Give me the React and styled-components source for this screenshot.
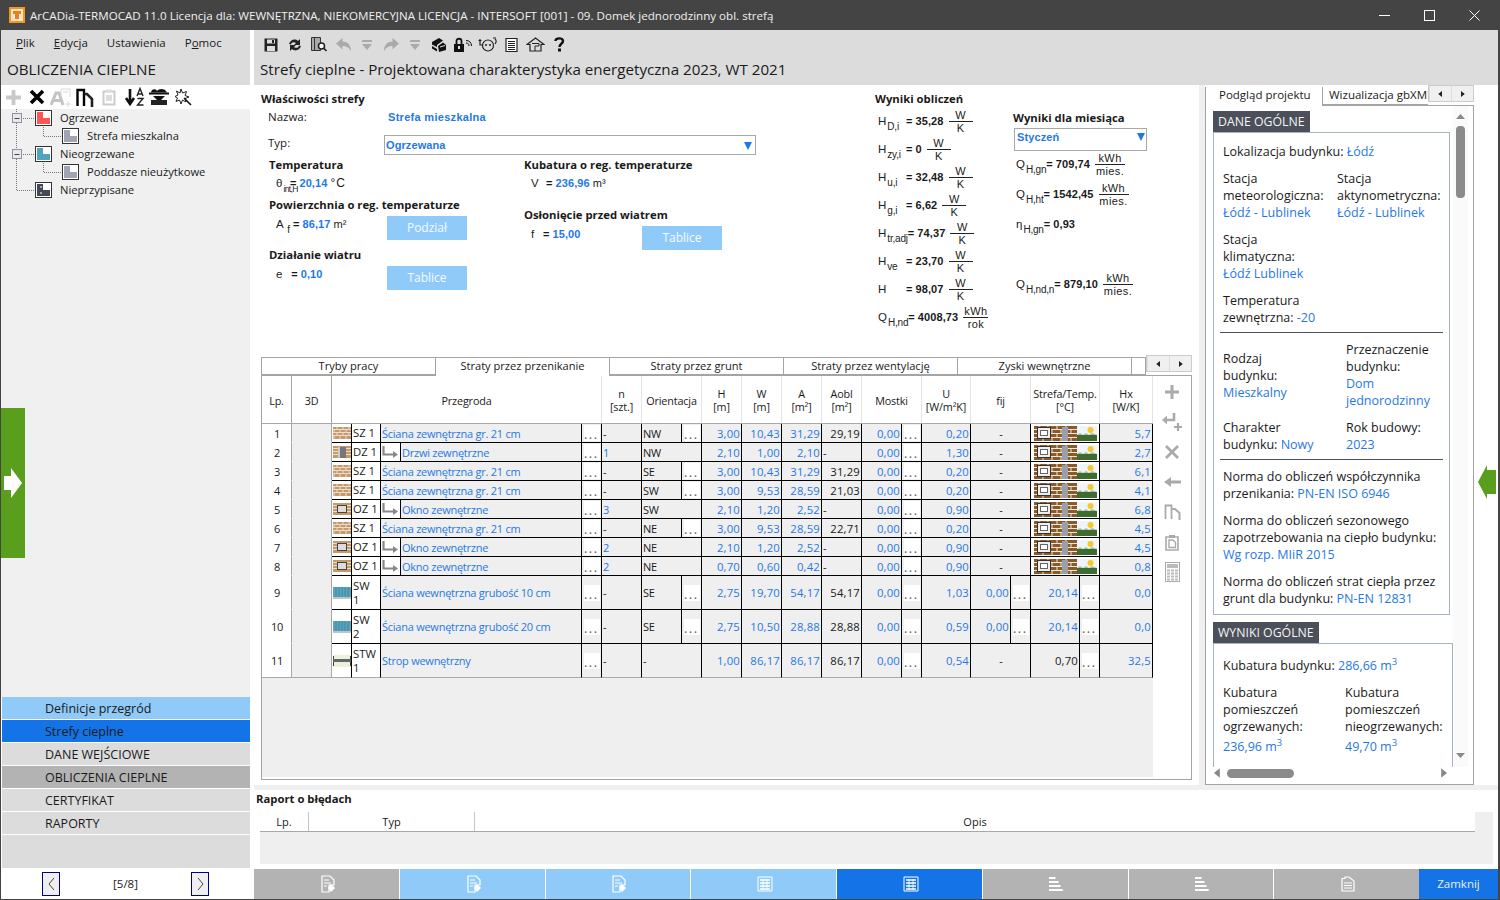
import React from "react";
import styled, { createGlobalStyle } from "styled-components";

const ui = '"Open Sans", "Noto Sans", sans-serif';
const arial = '"Liberation Sans", Arial, sans-serif';
const blue = "#1f78e6";

const GlobalStyle = createGlobalStyle`
  html, body { margin: 0; padding: 0; background: #fff; }
  * { box-sizing: border-box; }
  svg { flex: none; }
`;

const Window = styled.div`
  position: relative;
  width: 1500px;
  height: 900px;
  display: flex;
  flex-direction: column;
  overflow: hidden;
  border-left: 1px solid #444;
  border-right: 2px solid #444;
  border-bottom: 1px solid #444;
  font-family: ${ui};
  font-size: 11.5px;
  color: #1a1a1a;
  background: #fff;
`;

const TitleBar = styled.div`
  height: 30px;
  margin-left: -1px;
  margin-right: -2px;
  flex: none;
  background: #444;
  color: #f0f0f0;
  display: flex;
  align-items: center;
  padding: 0 3px 0 9px;
  font-size: 11.6px;
`;

const TitleText = styled.span`
  flex: 1;
  margin-left: 5px;
  white-space: nowrap;
`;

const WinButton = styled.span`
  width: 45px;
  height: 30px;
  display: flex;
  align-items: center;
  justify-content: center;
`;

const Body = styled.div`
  flex: 1;
  display: flex;
  min-height: 0;
`;

const Sidebar = styled.aside`
  width: 249px;
  flex: none;
  display: flex;
  flex-direction: column;
`;

const Menu = styled.nav`
  height: 25px;
  background: #dcdcdc;
  display: flex;
  align-items: center;
  gap: 19px;
  padding: 0 0 1px 15px;
`;

const PanelTitle = styled.div`
  height: 30px;
  background: #dcdcdc;
  font-size: 15.2px;
  padding-left: 6px;
  line-height: 29px;
  white-space: nowrap;
`;

const SideTools = styled.div`
  height: 24px;
  display: flex;
  align-items: center;
`;

const Slot = styled.span`
  width: ${(p) => p.$w || 24}px;
  flex: none;
  height: 24px;
  display: flex;
  align-items: center;
  justify-content: center;
`;

const Tree = styled.div`
  flex: 1;
  background: #f0f0f0;
`;

const TreeRow = styled.div`
  height: 18px;
  display: flex;
  align-items: center;
  white-space: nowrap;
`;

const TreeLabel = styled.span`
  margin: -2px 0 0 8px;
  font-size: 11.2px;
`;

const Nav = styled.div`
  display: flex;
  flex-direction: column;
  gap: 1px;
`;

const NavItem = styled.div`
  height: 22px;
  margin-left: 1px;
  padding-left: 43px;
  line-height: 24px;
  font-size: 12.5px;
  background: ${(p) => p.$bg};
`;

const NavFill = styled.div`
  height: 33px;
  margin-left: 1px;
  background: #dcdcdc;
`;

const Pager = styled.div`
  height: 31px;
  display: grid;
  grid-template-columns: 18px 1fr 18px;
  align-items: center;
  padding: 0 41px;
  text-align: center;
`;

const PagerButton = styled.span`
  height: 24px;
  border: 1px solid #000080;
  background: #efefef;
  display: flex;
  align-items: center;
  justify-content: center;
`;

const Main = styled.main`
  margin-left: 4px;
  flex: 1;
  min-width: 0;
  display: flex;
  flex-direction: column;
`;

const MainHeader = styled.header`
  height: 55px;
  flex: none;
  background: #dcdcdc;
`;

const MainTools = styled.div`
  height: 25px;
  padding: 4px 0 0 5px;
  display: flex;
  align-items: center;
`;

const HeaderTitle = styled.div`
  font-size: 15.15px;
  line-height: 29px;
  padding-left: 6px;
  white-space: nowrap;
`;

const Content = styled.div`
  height: 700px;
  flex: none;
  display: flex;
`;

const Center = styled.div`
  width: 945px;
  flex: none;
  display: flex;
  flex-direction: column;
`;

const TopPanel = styled.section`
  height: 265px;
  flex: none;
  padding: 6px 0 0 7px;
  display: grid;
  grid-template-columns: 614px 138px 1fr;
`;

const SectionTitle = styled.div`
  font-weight: 700;
  font-size: 11.3px;
  height: 16px;
  line-height: 16px;
  margin-top: ${(p) => p.$top || 0}px;
  white-space: nowrap;
`;

const NameRow = styled.div`
  display: grid;
  grid-template-columns: 120px 1fr;
  height: 16px;
  line-height: 16px;
  margin-top: 2px;
  padding-left: 7px;
`;

const BlueBold = styled.b`
  color: ${blue};
  font-family: ${arial};
  font-size: 11px;
  letter-spacing: 0.3px;
`;

const TypeRow = styled.div`
  display: grid;
  grid-template-columns: 116px 372px;
  margin-top: 10px;
  padding-left: 7px;
  line-height: 15px;
`;

const Select = styled.div`
  height: 20px;
  border: 1px solid #a8a8a8;
  display: flex;
  align-items: center;
  justify-content: space-between;
  padding: 1px 3px 0 1px;
  color: ${blue};
  font-family: ${arial};
  font-weight: 700;
  font-size: 11px;
  letter-spacing: 0.1px;
  background: #fff;
`;

const Caret = styled.i`
  width: 0;
  height: 0;
  border-left: 4px solid transparent;
  border-right: 4px solid transparent;
  border-top: 8px solid ${blue};
`;

const FormColumns = styled.div`
  display: grid;
  grid-template-columns: 255px 1fr;
  padding-left: 8px;
  margin-top: 2px;
`;

const FieldRow = styled.div`
  display: grid;
  grid-template-columns: 118px 80px;
  margin-top: ${(p) => p.$top || 0}px;
`;

const Formula = styled.div`
  height: ${(p) => p.$h || 16}px;
  margin-top: ${(p) => p.$top || 0}px;
  padding-left: ${(p) => p.$left ?? 7}px;
  display: flex;
  align-items: center;
  font-family: ${arial};
  font-size: 11px;
  white-space: nowrap;
  letter-spacing: 0.1px;
`;

const Sym = styled.span`
  display: inline-block;
  min-width: ${(p) => p.$w || 0}px;
  color: #222;
  font-size: 11.5px;
  letter-spacing: 0;
  sub {
    font-size: ${(p) => (p.$tight ? 8.5 : 10)}px;
    line-height: 0;
    vertical-align: -5px;
    margin-left: 1px;
    margin-right: ${(p) => (p.$tight ? -8 : 0)}px;
    letter-spacing: ${(p) => (p.$tight ? -0.6 : -0.2)}px;
  }
`;

const Val = styled.b`
  margin: 0 3px;
  color: ${(p) => (p.$blue ? blue : "#1a1a1a")};
`;

const Eq = styled.b`
  color: #1a1a1a;
`;

const Degree = styled.span`
  font-size: 12px;
  letter-spacing: 1px;
`;

const Fraction = styled.span`
  display: inline-flex;
  flex-direction: column;
  align-items: center;
  min-width: ${(p) => p.$w || 24}px;
  margin-left: 2px;
  line-height: 12px;
  font-size: 11px;
  letter-spacing: 0.4px;
  span:first-child {
    align-self: stretch;
    text-align: center;
    border-bottom: 1px solid #222;
    padding: 0 1px;
  }
`;

const ActionButton = styled.div`
  height: 24px;
  width: 80px;
  background: #90caf9;
  color: #f5fbff;
  text-align: center;
  line-height: 24px;
  font-size: 12px;
`;

const MonthColumn = styled.div`
  padding-top: 19px;
`;

const MonthSelect = styled(Select)`
  margin: 2px 0 0 1px;
  height: 23px;
  width: 133px;
  padding: 0 1px 5px 2px;
`;

const MonthRows = styled.div`
  display: flex;
  flex-direction: column;
  gap: 4px;
`;

const TablePanel = styled.section`
  flex: 1;
  padding: 7px 7px 5px;
  display: flex;
  flex-direction: column;
  min-height: 0;
`;

const TabsRow = styled.div`
  height: 18px;
  flex: none;
  display: flex;
  position: relative;
  z-index: 1;
`;

const Tab = styled.div`
  width: ${(p) => p.$w || 174}px;
  flex: none;
  height: ${(p) => (p.$active ? 19 : 18)}px;
  border: 1px solid #a4a4a4;
  border-left-width: ${(p) => (p.$first ? 1 : 0)}px;
  border-bottom-width: ${(p) => (p.$active ? 0 : 1)}px;
  background: #fff;
  text-align: center;
  line-height: 15px;
  font-size: 11.1px;
  white-space: nowrap;
  overflow: hidden;
`;

const ScrollPair = styled.div`
  margin: -2px 0 0 auto;
  width: 46px;
  height: 17px;
  flex: none;
  display: grid;
  grid-template-columns: 1fr 1fr;
  background: #f0f0f0;
  border: 1px solid #ccc;
  span {
    display: flex;
    align-items: center;
    justify-content: center;
    border-left: 1px solid #ddd;
  }
`;

const Frame = styled.div`
  height: 405px;
  flex: none;
  border: 1px solid #a4a4a4;
  display: flex;
`;

const TableArea = styled.div`
  width: 891px;
  flex: none;
  height: 401px;
  background: #efefef;
`;

const columns =
  "30px 40px 20px 29px 20px 181px 20px 40px 40px 20px 40px 40px 40px 40px 40px 20px 49px 40px 20px 49px 20px 53px";

const HeadRow = styled.div`
  height: 48px;
  display: grid;
  grid-template-columns: ${columns};
  background: #fff;
  border-bottom: 1px solid #a8a8a8;
`;

const HeadCell = styled.div`
  grid-column: ${(p) => p.$col};
  display: flex;
  align-items: center;
  justify-content: center;
  text-align: center;
  padding-top: 1px;
  line-height: 13px;
  font-size: 10.8px;
  letter-spacing: -0.15px;
  border-right: 1px solid ${(p) => (p.$strong ? "#a8a8a8" : "#e4e4e4")};
  white-space: pre-line;
`;

const Row = styled.div`
  height: ${(p) => (p.$tall ? 34 : 19)}px;
  display: grid;
  grid-template-columns: ${columns};
`;

const lineColor = (p) => {
  if (p.$last) return "#a8a8a8";
  return p.$soft ? "transparent" : "#000";
};

const Cell = styled.div`
  grid-column: ${(p) => p.$col};
  background: ${(p) => (p.$white ? "#fff" : "#efefef")};
  color: ${(p) => (p.$blue ? blue : "#1a1a1a")};
  border-right: 1px solid ${(p) => (p.$soft ? "#a8a8a8" : "#000")};
  border-bottom: 1px solid ${lineColor};
  display: flex;
  align-items: center;
  justify-content: ${(p) => p.$align || "flex-start"};
  padding: ${(p) => (p.$align === "flex-end" ? "0 1px 0 0" : p.$flush ? "0" : "0 0 0 1px")};
  white-space: nowrap;
  overflow: hidden;
  font-size: ${(p) => (p.$num ? 11.3 : 11)}px;
  letter-spacing: ${(p) => (p.$num ? "0.2px" : "-0.25px")};
`;

const Code = styled.span`
  width: ${(p) => (p.$tall ? "min-content" : "auto")};
  margin-left: 1px;
  white-space: ${(p) => (p.$tall ? "normal" : "nowrap")};
  line-height: 14px;
  font-size: 11.3px;
  letter-spacing: 0;
`;

const DotsBox = styled.span`
  width: 16px;
  height: 16px;
  margin: auto;
  background: #fff;
  color: #666;
  font-size: 10px;
  font-weight: 700;
  letter-spacing: 2px;
  line-height: 20px;
  text-align: center;
  overflow: hidden;
`;

const ToolColumn = styled.div`
  flex: 1;
  display: flex;
  flex-direction: column;
  align-items: center;
  gap: 6px;
  padding-top: 4px;
`;

const RightWrap = styled.div`
  flex: 1;
  min-width: 0;
  border-left: 6px solid #f0f0f0;
  padding-top: 2px;
`;

const RightFrame = styled.div`
  width: 269px;
`;

const RightTabs = styled.div`
  height: 18px;
  display: flex;
  position: relative;
  z-index: 1;
`;

const RightTab = styled.div`
  height: ${(p) => (p.$active ? 19 : 18)}px;
  width: ${(p) => p.$w}px;
  flex: none;
  background: #fff;
  border-left: 1px solid #a4a4a4;
  border-bottom: ${(p) => (p.$active ? "none" : "1px solid #a4a4a4")};
  line-height: 15px;
  padding-left: ${(p) => p.$pad}px;
  white-space: nowrap;
  overflow: hidden;
`;

const PreviewBox = styled.div`
  position: relative;
  height: 680px;
  border: 1px solid #a4a4a4;
  overflow: hidden;
  padding: 5px 0 0 7px;
  font-size: 12.5px;
  line-height: 17px;
`;

const DarkLabel = styled.div`
  display: inline-block;
  height: 21px;
  padding: 0 5px;
  background: #4b505a;
  color: #f5f5f5;
  line-height: 21px;
  font-size: 12.3px;
  vertical-align: top;
`;

const LabelBox = styled.div`
  width: ${(p) => p.$w}px;
  min-height: ${(p) => p.$min || 0}px;
  border: 1px solid #a5b3c4;
  padding: ${(p) => p.$pt || 10}px 3px 7px 9px;
  margin-bottom: ${(p) => p.$mb || 0}px;
  white-space: nowrap;
`;

const Para = styled.div`
  margin-bottom: ${(p) => p.$mb ?? 10}px;
`;

const Link = styled.span`
  color: ${blue};
  sup {
    font-size: 9.5px;
    line-height: 0;
  }
`;

const VolumeValue = styled(Link)`
  display: block;
  margin-top: 3px;
`;

const TwoCols = styled.div`
  display: grid;
  grid-template-columns: ${(p) => p.$first}px 1fr;
  align-items: ${(p) => p.$align || "start"};
  margin-bottom: ${(p) => p.$mb ?? 10}px;
`;

const Rule = styled.div`
  height: 1px;
  background: #4b505a;
  margin: 6px 3px 8px -3px;
  width: 223px;
`;

const VScroll = styled.div`
  position: absolute;
  top: 0;
  right: 5px;
  width: 15px;
  bottom: 17px;
  padding: 8px 0;
  background: #fafafa;
  display: flex;
  flex-direction: column;
  align-items: center;
`;

const VThumb = styled.div`
  width: 9px;
  height: 72px;
  margin: 6px 0 auto;
  border-radius: 4px;
  background: #8b8b8b;
`;

const HScroll = styled.div`
  position: absolute;
  left: 0;
  right: 0;
  bottom: 0;
  height: 17px;
  background: #fff;
  display: flex;
  align-items: center;
  padding: 0 26px 5px 8px;
  justify-content: space-between;
`;

const HThumb = styled.div`
  width: 67px;
  height: 9px;
  border-radius: 5px;
  background: #8b8b8b;
  margin: 0 auto 0 6px;
`;

const Strip = styled.div`
  height: 5px;
  flex: none;
  background: #f0f0f0;
`;

const Report = styled.section`
  height: 78px;
  flex: none;
  padding: 1px 5px 5px 2px;
`;

const ReportGrid = styled.div`
  margin: 5px 0 0 4px;
  height: 52px;
  background: #efefef;
`;

const ReportHead = styled.div`
  width: 1215px;
  height: 20px;
  display: grid;
  grid-template-columns: 49px 166px 1fr;
  background: #fff;
  border-bottom: 1px solid #a8a8a8;
  text-align: center;
  line-height: 19px;
  font-size: 11px;
`;

const ReportHeadCell = styled.div`
  border-right: ${(p) => (p.$border ? "1px solid #c4c4c4" : "none")};
`;

const BottomBar = styled.footer`
  height: 30px;
  margin-top: 1px;
  flex: none;
  display: flex;
  gap: 1px;
`;

const BottomButton = styled.div`
  flex: 1;
  background: ${(p) => p.$bg};
  display: flex;
  align-items: center;
  justify-content: center;
  padding-left: 3px;
`;

const CloseButton = styled.div`
  width: 79px;
  flex: none;
  margin-left: -1px;
  background: #1473e6;
  color: #e6f0ff;
  text-align: center;
  line-height: 30px;
  font-size: 11.5px;
`;

const EdgeArrow = styled.div`
  position: absolute;
  display: flex;
  align-items: center;
  justify-content: center;
  top: ${(p) => p.$top}px;
  height: ${(p) => p.$h}px;
  left: ${(p) => p.$left}px;
  width: ${(p) => p.$w}px;
  background: ${(p) => p.$bg};
`;

const TreeGuide = ({ kind }) => {
  const dots = { stroke: "#777", strokeDasharray: "1 1", fill: "none" };
  return (
    <svg width="34" height="18">
      {kind !== "last" && <path d="M15.5 0V18" {...dots} />}
      {kind === "last" && <path d="M15.5 0V9.5H33" {...dots} />}
      {kind === "open" && (
        <g>
          <path d="M22 9.5H33" {...dots} />
          <rect x="11.5" y="4.5" width="9" height="9" fill="#e8e8e8" stroke="#8a94a6" />
          <path d="M13.5 9.5H18.5" stroke="#445" />
        </g>
      )}
    </svg>
  );
};

const ChildGuide = () => (
  <svg width="27" height="18">
    <path d="M8.5 0V9.5H26" stroke="#777" strokeDasharray="1 1" fill="none" />
  </svg>
);

const ZoneIcon = ({ fill, mark }) => (
  <svg width="17" height="16">
    <rect x="0.5" y="0.5" width="16" height="15" fill="#fff" stroke="#333" />
    <path d="M2 2H8V8H15V14H2Z" fill={fill} />
    {mark && <path d="M5 5H7M5 11H7" stroke="#fff" />}
  </svg>
);

const Brick = () => (
  <svg width="18" height="12" viewBox="0 0 18 12">
    <rect width="18" height="12" fill="#c49a6c" />
    <path d="M0 2.5H18M0 5.5H18M0 8.5H18" stroke="#ecdcc8" />
    <path d="M4 0V2M10 0V2M16 0V2M1 3V5M7 3V5M13 3V5M4 6V8M10 6V8M16 6V8M1 9V12M7 9V12M13 9V12" stroke="#ecdcc8" />
  </svg>
);

const DoorIcon = () => (
  <svg width="18" height="12" viewBox="0 0 18 12">
    <rect width="18" height="12" fill="#c49a6c" />
    <path d="M0 2.5H18M0 5.5H18M0 8.5H18" stroke="#ecdcc8" />
    <rect x="7" y="1" width="6" height="11" fill="#777" />
    <rect x="5" y="1" width="2" height="11" fill="#ccc" />
  </svg>
);

const WindowIcon = () => (
  <svg width="18" height="12" viewBox="0 0 18 12">
    <rect width="18" height="12" fill="#c49a6c" />
    <path d="M0 2.5H18M0 5.5H18M0 8.5H18" stroke="#ecdcc8" />
    <rect x="4.5" y="2.5" width="9" height="7" fill="#ddd" stroke="#444" />
  </svg>
);

const InnerWall = () => (
  <svg width="18" height="12" viewBox="0 0 18 12">
    <rect width="18" height="10" fill="#5aa5bd" />
    <path d="M3 0V10M6 0V10M9 0V10M12 0V10M15 0V10" stroke="#3f8aa3" />
    <rect y="10" width="18" height="2" fill="#c4c4c4" />
  </svg>
);

const SlabIcon = () => (
  <svg width="18" height="12" viewBox="0 0 18 12">
    <rect width="18" height="12" fill="#e8f2dc" />
    <path d="M0.5 1V11M17.5 1V11" stroke="#444" />
    <rect y="4" width="18" height="3" fill="#666" />
  </svg>
);

const icons = { sz: Brick, dz: DoorIcon, oz: WindowIcon, sw: InnerWall, stw: SlabIcon };

const ZoneStrip = () => (
  <svg width="63" height="15" viewBox="0 0 63 15">
    <rect width="43" height="15" fill="#8b5a2b" />
    <path d="M0 3.5H43M0 7.5H43M0 11.5H43" stroke="#f2e6d5" />
    <path d="M5 0V3M14 0V3M23 0V3M32 0V3M9 4V7M18 4V7M27 4V7M37 4V7M5 8V11M14 8V11M23 8V11M32 8V11M9 12V15M18 12V15M27 12V15M37 12V15" stroke="#f2e6d5" />
    <rect x="3.5" y="1.5" width="13" height="11" fill="#eee" stroke="#333" />
    <rect x="6.5" y="4.5" width="7" height="5" fill="#fff" stroke="#666" />
    <rect x="28" y="1" width="6" height="14" fill="#9aa0aa" />
    <rect x="43" width="20" height="15" fill="#eef4f8" />
    <circle cx="56.5" cy="4" r="3" fill="#f5c92a" />
    <rect x="43" y="9" width="20" height="6" fill="#3d6b30" />
    <path d="M43 9L46 7L49 9L52 7L55 9L58 7L63 9" fill="#a8bca0" />
  </svg>
);

const Dots = () => <DotsBox>...</DotsBox>;

const Arrow = () => (
  <svg width="18" height="13" viewBox="0 0 18 13">
    <path d="M1.5 0V8.5H12" fill="none" stroke="#888" strokeWidth="2.2" />
    <path d="M11 5L16 8.5L11 12Z" fill="#888" />
  </svg>
);

const rows = [
  { lp: 1, icon: "sz", code: "SZ 1", name: "Ściana zewnętrzna gr. 21 cm", n: "-", or: "NW", h: "3,00", w: "10,43", a: "31,29", ao: "29,19", u: "0,20", hx: "5,7" },
  { lp: 2, icon: "dz", code: "DZ 1", child: true, name: "Drzwi zewnętrzne", n: "1", or: "NW", h: "2,10", w: "1,00", a: "2,10", ao: "-", u: "1,30", hx: "2,7" },
  { lp: 3, icon: "sz", code: "SZ 1", name: "Ściana zewnętrzna gr. 21 cm", n: "-", or: "SE", h: "3,00", w: "10,43", a: "31,29", ao: "31,29", u: "0,20", hx: "6,1" },
  { lp: 4, icon: "sz", code: "SZ 1", name: "Ściana zewnętrzna gr. 21 cm", n: "-", or: "SW", h: "3,00", w: "9,53", a: "28,59", ao: "21,03", u: "0,20", hx: "4,1" },
  { lp: 5, icon: "oz", code: "OZ 1", child: true, name: "Okno zewnętrzne", n: "3", or: "SW", h: "2,10", w: "1,20", a: "2,52", ao: "-", u: "0,90", hx: "6,8" },
  { lp: 6, icon: "sz", code: "SZ 1", name: "Ściana zewnętrzna gr. 21 cm", n: "-", or: "NE", h: "3,00", w: "9,53", a: "28,59", ao: "22,71", u: "0,20", hx: "4,5" },
  { lp: 7, icon: "oz", code: "OZ 1", child: true, name: "Okno zewnętrzne", n: "2", or: "NE", h: "2,10", w: "1,20", a: "2,52", ao: "-", u: "0,90", hx: "4,5" },
  { lp: 8, icon: "oz", code: "OZ 1", child: true, name: "Okno zewnętrzne", n: "2", or: "NE", h: "0,70", w: "0,60", a: "0,42", ao: "-", u: "0,90", hx: "0,8" },
  { lp: 9, tall: true, icon: "sw", code: "SW 1", name: "Ściana wewnętrzna grubość 10 cm", n: "-", or: "SE", h: "2,75", w: "19,70", a: "54,17", ao: "54,17", u: "1,03", fij: "0,00", st: "20,14", hx: "0,0" },
  { lp: 10, tall: true, icon: "sw", code: "SW 2", name: "Ściana wewnętrzna grubość 20 cm", n: "-", or: "SE", h: "2,75", w: "10,50", a: "28,88", ao: "28,88", u: "0,59", fij: "0,00", st: "20,14", hx: "0,0" },
  { lp: 11, tall: true, last: true, icon: "stw", code: "STW 1", name: "Strop wewnętrzny", n: "-", or: "-", noOrDots: true, h: "1,00", w: "86,17", a: "86,17", ao: "86,17", u: "0,54", st: "0,70", stBlack: true, hx: "32,5" },
];

const TableRow = ({ r }) => {
  const Icon = icons[r.icon];
  const hideOrDots = r.child || r.noOrDots;
  const last = r.last;
  return (
    <Row $tall={r.tall}>
      <Cell $col="1" $white $soft $last={last} $align="center">{r.lp}</Cell>
      <Cell $col="2" $soft $last={last} />
      <Cell $col="3" $white $last={last} $align="center" $flush><Icon /></Cell>
      <Cell $col="4" $white $last={last} $flush><Code $tall={r.tall}>{r.code}</Code></Cell>
      {r.child ? (
        <>
          <Cell $col="5" $white $last={last} $align="center" $flush><Arrow /></Cell>
          <Cell $col="6" $blue $last={last}>{r.name}</Cell>
        </>
      ) : (
        <Cell $col="5 / span 2" $blue $last={last}>{r.name}</Cell>
      )}
      <Cell $col="7" $last={last} $flush><Dots /></Cell>
      <Cell $col="8" $blue={r.n !== "-"} $last={last}>{r.n}</Cell>
      {hideOrDots ? (
        <Cell $col="9 / span 2" $last={last}>{r.or}</Cell>
      ) : (
        <>
          <Cell $col="9" $last={last}>{r.or}</Cell>
          <Cell $col="10" $last={last} $flush><Dots /></Cell>
        </>
      )}
      <Cell $col="11" $blue $num $last={last} $align="flex-end">{r.h}</Cell>
      <Cell $col="12" $blue $num $last={last} $align="flex-end">{r.w}</Cell>
      <Cell $col="13" $blue $num $last={last} $align="flex-end">{r.a}</Cell>
      <Cell $col="14" $num $last={last} $align={r.ao === "-" ? undefined : "flex-end"}>{r.ao}</Cell>
      <Cell $col="15" $blue $num $last={last} $align="flex-end">0,00</Cell>
      <Cell $col="16" $last={last} $flush><Dots /></Cell>
      <Cell $col="17" $blue $num $last={last} $align="flex-end">{r.u}</Cell>
      {r.fij ? (
        <>
          <Cell $col="18" $blue $num $last={last} $align="flex-end">{r.fij}</Cell>
          <Cell $col="19" $last={last} $flush><Dots /></Cell>
        </>
      ) : (
        <Cell $col="18 / span 2" $last={last} $align="center">-</Cell>
      )}
      {r.st ? (
        <>
          <Cell $col="20" $blue={!r.stBlack} $num $last={last} $align="flex-end">{r.st}</Cell>
          <Cell $col="21" $last={last} $flush><Dots /></Cell>
        </>
      ) : (
        <Cell $col="20 / span 2" $white $last={last} $align="center" $flush><ZoneStrip /></Cell>
      )}
      <Cell $col="22" $blue $num $last={last} $align="flex-end">{r.hx}</Cell>
    </Row>
  );
};

const Ic = ({ w = 16, h = 16, children }) => (
  <svg width={w} height={h} viewBox={`0 0 ${w} ${h}`}>{children}</svg>
);

const SideToolbar = () => (
  <SideTools>
    <Slot>
      <Ic w={17} h={17}><path d="M8.5 1V16M1 8.5H16" stroke="#c8c8c8" strokeWidth="3.8" /></Ic>
    </Slot>
    <Slot>
      <Ic w={16} h={16}><path d="M2 2L14 14M14 2L2 14" stroke="#000" strokeWidth="3.6" /></Ic>
    </Slot>
    <Slot>
      <Ic w={22} h={20}>
        <path d="M1 18L6 6H9L13 18M3.5 13.5H11" fill="none" stroke="#c4c4c4" strokeWidth="3" />
        <path d="M11 9V2H20V10M13 5H18M15 17H21M18 14V20" fill="none" stroke="#d8d8d8" />
      </Ic>
    </Slot>
    <Slot>
      <Ic w={18} h={19}>
        <path d="M1.5 18V2H8V18" fill="none" stroke="#000" strokeWidth="2.4" />
        <path d="M8 6H11L16 11V19" fill="none" stroke="#222" strokeWidth="2.6" />
      </Ic>
    </Slot>
    <Slot>
      <Ic w={16} h={18}>
        <path d="M2.5 3.5H13.5V16.5H2.5Z" fill="#fff" stroke="#ccc" strokeWidth="2" />
        <path d="M5 1.5H11V4H5ZM5 7H11V13H5Z" fill="#ddd" />
      </Ic>
    </Slot>
    <Slot $w={27}>
      <Ic w={22} h={20}>
        <path d="M6 2V15M2 11L6 17L10 11" fill="none" stroke="#111" strokeWidth="2.6" />
        <path d="M13 9L16 1.5L19 9M14 7H18M13.5 11.5H19L13.5 18H19.5" fill="none" stroke="#222" strokeWidth="1.4" />
      </Ic>
    </Slot>
    <Slot $w={21}>
      <Ic w={22} h={18}>
        <path d="M1 5.5H21" stroke="#111" strokeWidth="2" />
        <path d="M3 4.5C3 1 8 0 9 3C11 0 17 0 19 4.5ZM5 8H17L13 12H9Z" fill="#111" />
        <path d="M3 12H19V17H3Z" fill="#222" />
      </Ic>
    </Slot>
    <Slot $w={27}>
      <Ic w={18} h={18}>
        <path d="M7 1L8.5 5L12.5 3.5L11 7.5L15 9L11 10.5L12 14L8.5 12L7 16L5.5 12L2 13.5L3.5 10L1 8.5L4 7L2.5 3L6 5Z" fill="#fff" stroke="#222" />
        <path d="M10 10L17 17" stroke="#111" strokeWidth="1.6" />
      </Ic>
    </Slot>
  </SideTools>
);

const ToolIcons = () => (
  <MainTools>
    <Slot>
      <Ic w={14} h={14}>
        <path d="M0.5 0.5H13.5V13.5H0.5Z" fill="#222" />
        <rect x="3" y="1.5" width="8" height="4" fill="#ddd" />
        <rect x="3" y="8" width="8" height="5" fill="#ddd" />
        <rect x="8" y="2" width="2" height="3" fill="#222" />
      </Ic>
    </Slot>
    <Slot>
      <Ic w={14} h={14}>
        <path d="M1 6C2 2 7 0 10 3L12 1V7H6L8 5C6 3.5 3.5 4 3 6.5ZM13 8C12 12 7 14 4 11L2 13V7H8L6 9C8 10.5 10.5 10 11 7.5Z" fill="#222" />
      </Ic>
    </Slot>
    <Slot>
      <Ic w={16} h={15}>
        <path d="M0.5 0.5H9.5V13.5H0.5Z" fill="#aaa" stroke="#333" />
        <path d="M3.5 1V13" stroke="#333" />
        <circle cx="10.5" cy="9" r="3" fill="#fff" stroke="#222" strokeWidth="1.5" />
        <path d="M12.5 11L15.5 14" stroke="#222" strokeWidth="1.6" />
      </Ic>
    </Slot>
    <Slot>
      <Ic w={17} h={14}><path d="M1 5.5L7.5 0V3.5C12 3.5 16 6.5 16 13C14 9.5 11.5 8 7.5 8V11.5Z" fill="#aaa" /></Ic>
    </Slot>
    <Slot>
      <Ic w={10} h={12}><path d="M0 1H10V3H0ZM0 5H10L5 11Z" fill="#aaa" /></Ic>
    </Slot>
    <Slot>
      <Ic w={17} h={14}><path d="M16 5.5L9.5 0V3.5C5 3.5 1 6.5 1 13C3 9.5 5.5 8 9.5 8V11.5Z" fill="#aaa" /></Ic>
    </Slot>
    <Slot>
      <Ic w={10} h={12}><path d="M0 1H10V3H0ZM0 5H10L5 11Z" fill="#aaa" /></Ic>
    </Slot>
    <Slot>
      <Ic w={16} h={15}>
        <path d="M1 5L8 1L12 3.5L6 8V10L1 7.5ZM1 9L6 12V14.5L1 11.5Z" fill="#111" />
        <path d="M7 9L12 5.5L15 8V13L8 15Z" fill="#111" />
        <path d="M9 10L14 8.5" stroke="#ddd" />
      </Ic>
    </Slot>
    <Slot>
      <Ic w={20} h={15}>
        <rect x="1" y="7" width="10" height="8" fill="#111" />
        <path d="M3.5 7V4C3.5 1 8.5 1 8.5 4V7" fill="none" stroke="#111" strokeWidth="1.8" />
        <rect x="5" y="9" width="2" height="3" fill="#ddd" />
        <path d="M13 6C15 6 16 7 16 9M13 3.5C16.5 3.5 18.5 5.5 18.5 9" fill="none" stroke="#111" />
      </Ic>
    </Slot>
    <Slot>
      <Ic w={19} h={15}>
        <circle cx="10" cy="8.5" r="5.5" fill="#ddd" stroke="#222" strokeWidth="1.2" />
        <circle cx="8" cy="8" r="1" fill="#222" />
        <circle cx="12" cy="8" r="1" fill="#222" />
        <path d="M2 2V8H4.5M17 2C18.5 3 18.5 5 17 7" fill="none" stroke="#222" strokeWidth="1.2" />
        <path d="M0.5 3.5H3.5M15 1H18" stroke="#222" />
      </Ic>
    </Slot>
    <Slot>
      <Ic w={13} h={15}>
        <path d="M1 1.5H12V14.5H1Z" fill="#fff" stroke="#222" strokeWidth="1.2" />
        <path d="M3 4.5H10M3 6.5H10M3 8.5H10M3 10.5H10M3 12.5H10" stroke="#222" />
      </Ic>
    </Slot>
    <Slot>
      <Ic w={19} h={15}>
        <path d="M1 7.5L9.5 1L18 7.5H15V14H4V7.5Z" fill="none" stroke="#222" strokeWidth="1.2" />
        <path d="M6 6.5H13V9H9V14" fill="none" stroke="#222" />
      </Ic>
    </Slot>
    <Slot>
      <Ic w={11} h={15}>
        <path d="M1.5 4C1.5 0.5 9 0.5 9 4C9 7 5.5 6.5 5.5 10" fill="none" stroke="#111" strokeWidth="2.4" />
        <rect x="4" y="11.5" width="3" height="3" fill="#111" />
      </Ic>
    </Slot>
  </MainTools>
);

const DocIcon = () => (
  <svg width="14" height="18" viewBox="0 0 14 18">
    <path d="M1 1H9L13 5V10H8V17H1Z" fill="none" stroke="#fff" strokeWidth="1.2" />
    <path d="M3 5H8M3 8H10M3 11H6" stroke="#fff" />
    <path d="M10 9L14 13L10 17L7 13Z" fill="#fff" />
  </svg>
);

const TableIcon = () => (
  <svg width="16" height="16" viewBox="0 0 16 16">
    <path d="M1 1H15V15H1Z" fill="none" stroke="#fff" />
    <path d="M3 4H13M3 7H13M3 10H13M3 13H13" stroke="#fff" strokeWidth="1.4" />
    <path d="M6 3V14M10 3V14" stroke="#fff" strokeWidth="0.8" />
  </svg>
);

const BarsIcon = () => (
  <svg width="15" height="16" viewBox="0 0 15 16">
    <path d="M0 1H6L7 2L6 3H0ZM0 5H9L10 6L9 7H0ZM0 9H11L12 10L11 11H0ZM0 13H13L14.5 14L13 15H0Z" fill="#fff" />
  </svg>
);

const ClipDocIcon = () => (
  <svg width="14" height="16" viewBox="0 0 14 16">
    <path d="M1 2.5H4V1H8L13 5V15H1Z" fill="none" stroke="#fff" strokeWidth="1.2" />
    <path d="M3 7H11M3 9.5H11M3 12H11" stroke="#fff" />
  </svg>
);

const tableTools = (
  <ToolColumn>
    <Slot $w={38}><Ic w={16} h={16}><path d="M8 1V15M1 8H15" stroke="#aaa" strokeWidth="3" /></Ic></Slot>
    <Slot $w={38}>
      <Ic w={22} h={20}>
        <path d="M13 1V8H4" fill="none" stroke="#aaa" strokeWidth="2.6" />
        <path d="M6 3.5L1 8L6 12.5Z" fill="#aaa" />
        <path d="M17 11V19M13 15H21" stroke="#aaa" strokeWidth="2.2" />
      </Ic>
    </Slot>
    <Slot $w={38}><Ic w={14} h={14}><path d="M1 1L13 13M13 1L1 13" stroke="#aaa" strokeWidth="2.8" /></Ic></Slot>
    <Slot $w={38}><Ic w={17} h={12}><path d="M0 6L7 1V4.5H17V7.5H7V11Z" fill="#aaa" /></Ic></Slot>
    <Slot $w={38}>
      <Ic w={17} h={16}>
        <path d="M1.5 15V1.5H7.5V15" fill="none" stroke="#aaa" strokeWidth="1.8" />
        <path d="M8 5H11L15.5 9V16" fill="none" stroke="#aaa" strokeWidth="2" />
      </Ic>
    </Slot>
    <Slot $w={38}>
      <Ic w={14} h={17}>
        <path d="M1 3H13V16H1Z" fill="#fff" stroke="#aaa" strokeWidth="1.6" />
        <path d="M4 1H10V4H4Z" fill="#aaa" />
        <path d="M4 6H8L10.5 8.5V13.5H4Z" fill="none" stroke="#aaa" strokeWidth="1.4" />
      </Ic>
    </Slot>
    <Slot $w={38}>
      <Ic w={15} h={20}>
        <rect x="0.5" y="0.5" width="14" height="19" fill="#fff" stroke="#aaa" />
        <rect x="2" y="2" width="11" height="4" fill="#bbb" />
        <path d="M2 8.5H13M2 11.5H13M2 14.5H13M2 17.5H13" stroke="#bbb" strokeWidth="2" strokeDasharray="3 1" />
      </Ic>
    </Slot>
  </ToolColumn>
);

const Triangle = ({ dir, color = "#222", size = 3 }) => (
  <svg width={size + 2} height={size * 2} viewBox="0 0 6 8">
    <path d={dir === "left" ? "M5 0V8L0 4Z" : "M1 0V8L6 4Z"} fill={color} />
  </svg>
);

export default function App() {
  return (
    <>
      <GlobalStyle />
      <Window>
        <TitleBar>
          <svg width="16" height="16" viewBox="0 0 16 16">
            <rect width="16" height="16" fill="#f7941d" />
            <rect x="2" y="2" width="12" height="12" fill="#fde9cf" />
            <path d="M4 4H12V7H10V12H6V7H4Z" fill="#ef7f1a" />
          </svg>
          <TitleText>ArCADia-TERMOCAD 11.0 Licencja dla: WEWNĘTRZNA, NIEKOMERCYJNA LICENCJA - INTERSOFT [001] - 09. Domek jednorodzinny obl. strefą</TitleText>
          <WinButton>
            <svg width="11" height="11"><path d="M0 5.5H11" stroke="#fff" /></svg>
          </WinButton>
          <WinButton>
            <svg width="11" height="11"><rect x="0.5" y="0.5" width="10" height="10" fill="none" stroke="#fff" /></svg>
          </WinButton>
          <WinButton>
            <svg width="11" height="11"><path d="M0.5 0.5L10.5 10.5M10.5 0.5L0.5 10.5" stroke="#fff" /></svg>
          </WinButton>
        </TitleBar>
        <Body>
          <Sidebar>
            <Menu>
              <span><u>P</u>lik</span>
              <span><u>E</u>dycja</span>
              <span>Ustawienia</span>
              <span>P<u>o</u>moc</span>
            </Menu>
            <PanelTitle>OBLICZENIA CIEPLNE</PanelTitle>
            <SideToolbar />
            <Tree>
              <TreeRow><TreeGuide kind="open" /><ZoneIcon fill="#f55" /><TreeLabel>Ogrzewane</TreeLabel></TreeRow>
              <TreeRow><TreeGuide kind="line" /><ChildGuide /><ZoneIcon fill="#a0a4b4" /><TreeLabel>Strefa mieszkalna</TreeLabel></TreeRow>
              <TreeRow><TreeGuide kind="open" /><ZoneIcon fill="#52a3bb" /><TreeLabel>Nieogrzewane</TreeLabel></TreeRow>
              <TreeRow><TreeGuide kind="line" /><ChildGuide /><ZoneIcon fill="#a0a4b4" /><TreeLabel>Poddasze nieużytkowe</TreeLabel></TreeRow>
              <TreeRow><TreeGuide kind="last" /><ZoneIcon fill="#444a55" mark /><TreeLabel>Nieprzypisane</TreeLabel></TreeRow>
            </Tree>
            <Nav>
              <NavItem $bg="#90caf9">Definicje przegród</NavItem>
              <NavItem $bg="#1473e6">Strefy cieplne</NavItem>
              <NavItem $bg="#dcdcdc">DANE WEJŚCIOWE</NavItem>
              <NavItem $bg="#b3b3b3">OBLICZENIA CIEPLNE</NavItem>
              <NavItem $bg="#dcdcdc">CERTYFIKAT</NavItem>
              <NavItem $bg="#dcdcdc">RAPORTY</NavItem>
              <NavFill />
            </Nav>
            <Pager>
              <PagerButton>
                <svg width="7" height="14"><path d="M6 1L1 7L6 13" fill="none" stroke="#444" /></svg>
              </PagerButton>
              <span>[5/8]</span>
              <PagerButton>
                <svg width="7" height="14"><path d="M1 1L6 7L1 13" fill="none" stroke="#444" /></svg>
              </PagerButton>
            </Pager>
          </Sidebar>
          <Main>
            <MainHeader>
              <ToolIcons />
              <HeaderTitle>Strefy cieplne - Projektowana charakterystyka energetyczna 2023, WT 2021</HeaderTitle>
            </MainHeader>
            <Content>
              <Center>
                <TopPanel>
                  <div>
                    <SectionTitle>Właściwości strefy</SectionTitle>
                    <NameRow>
                      <span>Nazwa:</span>
                      <BlueBold>Strefa mieszkalna</BlueBold>
                    </NameRow>
                    <TypeRow>
                      <span>Typ:</span>
                      <Select>Ogrzewana<Caret /></Select>
                    </TypeRow>
                    <FormColumns>
                      <div>
                        <SectionTitle>Temperatura</SectionTitle>
                        <Formula $top={2}>
                          <Sym $tight>θ<sub>int,H</sub></Sym><Eq>=</Eq><Val $blue>20,14</Val><Degree>°C</Degree>
                        </Formula>
                        <SectionTitle $top={6}>Powierzchnia o reg. temperaturze</SectionTitle>
                        <FieldRow $top={3}>
                          <Formula>
                            <Sym>A<sub>&nbsp;f</sub></Sym><Eq>&nbsp;=</Eq><Val $blue>86,17</Val><span>m²</span>
                          </Formula>
                          <ActionButton>Podział</ActionButton>
                        </FieldRow>
                        <SectionTitle $top={7}>Działanie wiatru</SectionTitle>
                        <FieldRow $top={3}>
                          <Formula>
                            <Sym $w={12}>e</Sym><Eq>&nbsp;=</Eq><Val $blue>0,10</Val>
                          </Formula>
                          <ActionButton>Tablice</ActionButton>
                        </FieldRow>
                      </div>
                      <div>
                        <SectionTitle>Kubatura o reg. temperaturze</SectionTitle>
                        <Formula $top={2}>
                          <Sym $w={15}>V</Sym><Eq>=</Eq><Val $blue>236,96</Val><span>m³</span>
                        </Formula>
                        <SectionTitle $top={16}>Osłonięcie przed wiatrem</SectionTitle>
                        <FieldRow $top={3}>
                          <Formula>
                            <Sym $w={12}>f</Sym><Eq>=</Eq><Val $blue>15,00</Val>
                          </Formula>
                          <ActionButton>Tablice</ActionButton>
                        </FieldRow>
                      </div>
                    </FormColumns>
                  </div>
                  <div>
                    <SectionTitle>Wyniki obliczeń</SectionTitle>
                    {[
                      ["D,i", "35,28"], ["zy,i", "0"], ["u,i", "32,48"], ["g,i", "6,62"],
                      ["tr,adj", "74,37"], ["ve", "23,70"], ["", "98,07"],
                    ].map(([sub, value]) => (
                      <Formula $h={28} $left={3} key={sub}>
                        <Sym $w={28}>H<sub>{sub}</sub></Sym><Eq>=</Eq><Val>{value}</Val>
                        <Fraction><span>W</span><span>K</span></Fraction>
                      </Formula>
                    ))}
                    <Formula $h={28} $left={3}>
                      <Sym>Q<sub>H,nd</sub></Sym><Eq>=</Eq><Val>4008,73</Val>
                      <Fraction><span>kWh</span><span>rok</span></Fraction>
                    </Formula>
                  </div>
                  <MonthColumn>
                    <SectionTitle>Wyniki dla miesiąca</SectionTitle>
                    <MonthSelect>Styczeń<Caret /></MonthSelect>
                    <MonthRows>
                      <Formula $h={26} $left={3}>
                        <Sym>Q<sub>H,gn</sub></Sym><Eq>=</Eq><Val>709,74</Val>
                        <Fraction $w={30}><span>kWh</span><span>mies.</span></Fraction>
                      </Formula>
                      <Formula $h={26} $left={3}>
                        <Sym>Q<sub>H,ht</sub></Sym><Eq>=</Eq><Val>1542,45</Val>
                        <Fraction $w={30}><span>kWh</span><span>mies.</span></Fraction>
                      </Formula>
                      <Formula $h={26} $left={3}>
                        <Sym>η<sub>H,gn</sub></Sym><Eq>=</Eq><Val>0,93</Val>
                      </Formula>
                      <Formula $h={26} />
                      <Formula $h={26} $left={3}>
                        <Sym>Q<sub>H,nd,n</sub></Sym><Eq>=</Eq><Val>879,10</Val>
                        <Fraction $w={30}><span>kWh</span><span>mies.</span></Fraction>
                      </Formula>
                    </MonthRows>
                  </MonthColumn>
                </TopPanel>
                <TablePanel>
                  <TabsRow>
                    <Tab $first $w={175}>Tryby pracy</Tab>
                    <Tab $active>Straty przez przenikanie</Tab>
                    <Tab>Straty przez grunt</Tab>
                    <Tab>Straty przez wentylację</Tab>
                    <Tab>Zyski wewnętrzne</Tab>
                    <Tab $w={14} />
                    <ScrollPair>
                      <span><Triangle dir="left" /></span>
                      <span><Triangle dir="right" /></span>
                    </ScrollPair>
                  </TabsRow>
                  <Frame>
                    <TableArea>
                      <HeadRow>
                        <HeadCell $col="1" $strong>Lp.</HeadCell>
                        <HeadCell $col="2" $strong>3D</HeadCell>
                        <HeadCell $col="3 / span 5">Przegroda</HeadCell>
                        <HeadCell $col="8">{"n\n[szt.]"}</HeadCell>
                        <HeadCell $col="9 / span 2">Orientacja</HeadCell>
                        <HeadCell $col="11">{"H\n[m]"}</HeadCell>
                        <HeadCell $col="12">{"W\n[m]"}</HeadCell>
                        <HeadCell $col="13">{"A\n[m²]"}</HeadCell>
                        <HeadCell $col="14">{"Aobl\n[m²]"}</HeadCell>
                        <HeadCell $col="15 / span 2">Mostki</HeadCell>
                        <HeadCell $col="17">{"U\n[W/m²K]"}</HeadCell>
                        <HeadCell $col="18 / span 2">fij</HeadCell>
                        <HeadCell $col="20 / span 2">{"Strefa/Temp.\n[°C]"}</HeadCell>
                        <HeadCell $col="22">{"Hx\n[W/K]"}</HeadCell>
                      </HeadRow>
                      {rows.map((r) => <TableRow key={r.lp} r={r} />)}
                    </TableArea>
                    {tableTools}
                  </Frame>
                </TablePanel>
              </Center>
              <RightWrap>
                <RightFrame>
                  <RightTabs>
                    <RightTab $active $w={117} $pad={13}>Podgląd projektu</RightTab>
                    <RightTab $w={106} $pad={6}>Wizualizacja gbXML</RightTab>
                    <ScrollPair>
                      <span><Triangle dir="left" /></span>
                      <span><Triangle dir="right" /></span>
                    </ScrollPair>
                  </RightTabs>
                  <PreviewBox>
                    <DarkLabel>DANE OGÓLNE</DarkLabel>
                    <LabelBox $w={237} $mb={7}>
                      <Para>Lokalizacja budynku: <Link>Łódź</Link></Para>
                      <TwoCols $first={114}>
                        <div>Stacja<br />meteorologiczna:<br /><Link>Łódź - Lublinek</Link></div>
                        <div>Stacja<br />aktynometryczna:<br /><Link>Łódź - Lublinek</Link></div>
                      </TwoCols>
                      <Para>Stacja<br />klimatyczna:<br /><Link>Łódź Lublinek</Link></Para>
                      <Para $mb={0}>Temperatura<br />zewnętrzna: <Link>-20</Link></Para>
                      <Rule />
                      <TwoCols $first={123} $align="center">
                        <div>Rodzaj<br />budynku:<br /><Link>Mieszkalny</Link></div>
                        <div>Przeznaczenie<br />budynku:<br /><Link>Dom<br />jednorodzinny</Link></div>
                      </TwoCols>
                      <TwoCols $first={123} $mb={0}>
                        <div>Charakter<br />budynku: <Link>Nowy</Link></div>
                        <div>Rok budowy:<br /><Link>2023</Link></div>
                      </TwoCols>
                      <Rule />
                      <Para>Norma do obliczeń współczynnika<br />przenikania: <Link>PN-EN ISO 6946</Link></Para>
                      <Para>Norma do obliczeń sezonowego<br />zapotrzebowania na ciepło budynku:<br /><Link>Wg rozp. MIiR 2015</Link></Para>
                      <Para $mb={0}>Norma do obliczeń strat ciepła przez<br />grunt dla budynku: <Link>PN-EN 12831</Link></Para>
                    </LabelBox>
                    <DarkLabel>WYNIKI OGÓLNE</DarkLabel>
                    <LabelBox $w={240} $pt={13} $min={200}>
                      <Para>Kubatura budynku: <Link>286,66 m<sup>3</sup></Link></Para>
                      <TwoCols $first={122}>
                        <div>Kubatura<br />pomieszczeń<br />ogrzewanych:<VolumeValue>236,96 m<sup>3</sup></VolumeValue></div>
                        <div>Kubatura<br />pomieszczeń<br />nieogrzewanych:<VolumeValue>49,70 m<sup>3</sup></VolumeValue></div>
                      </TwoCols>
                    </LabelBox>
                    <VScroll>
                      <svg width="9" height="6"><path d="M0 5H9L4.5 0Z" fill="#888" /></svg>
                      <VThumb />
                      <svg width="9" height="6"><path d="M0 0H9L4.5 5Z" fill="#888" /></svg>
                    </VScroll>
                    <HScroll>
                      <Triangle dir="left" color="#888" size={5} />
                      <HThumb />
                      <Triangle dir="right" color="#888" size={5} />
                    </HScroll>
                  </PreviewBox>
                </RightFrame>
              </RightWrap>
            </Content>
            <Strip />
            <Report>
              <SectionTitle>Raport o błędach</SectionTitle>
              <ReportGrid>
                <ReportHead>
                  <ReportHeadCell $border>Lp.</ReportHeadCell>
                  <ReportHeadCell $border>Typ</ReportHeadCell>
                  <ReportHeadCell>Opis</ReportHeadCell>
                </ReportHead>
              </ReportGrid>
            </Report>
            <BottomBar>
              <BottomButton $bg="#b3b3b3"><DocIcon /></BottomButton>
              <BottomButton $bg="#90caf9"><DocIcon /></BottomButton>
              <BottomButton $bg="#90caf9"><DocIcon /></BottomButton>
              <BottomButton $bg="#90caf9"><TableIcon /></BottomButton>
              <BottomButton $bg="#1473e6"><TableIcon /></BottomButton>
              <BottomButton $bg="#b3b3b3"><BarsIcon /></BottomButton>
              <BottomButton $bg="#b3b3b3"><BarsIcon /></BottomButton>
              <BottomButton $bg="#b3b3b3"><ClipDocIcon /></BottomButton>
              <CloseButton>Zamknij</CloseButton>
            </BottomBar>
          </Main>
        </Body>
        <EdgeArrow $top={408} $h={150} $left={0} $w={24} $bg="#5a9e1e">
          <svg width="18" height="30" viewBox="0 0 18 30">
            <path d="M0 8H7V0L18 15L7 30V22H0Z" fill="#fff" />
          </svg>
        </EdgeArrow>
        <EdgeArrow $top={465} $h={34} $left={1477} $w={18} $bg="transparent">
          <svg width="18" height="34" viewBox="0 0 18 34">
            <path d="M18 5H9V0L0 17L9 34V29H18Z" fill="#5a9e1e" />
          </svg>
        </EdgeArrow>
      </Window>
    </>
  );
}
